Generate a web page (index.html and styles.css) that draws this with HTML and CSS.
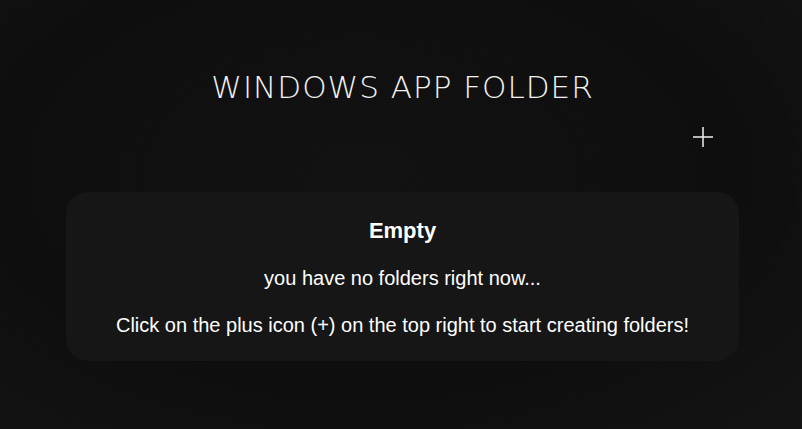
FILE: index.html
```html
<!DOCTYPE html>
<html>

	<head>
		<meta charset="UTF-8">
		<title>Windows App Folder</title>
		<link rel="stylesheet" href="styles.css">
	</head>

	<body>
		<div id="app">
			<h1 class="title">WINDOWS APP FOLDER</h1>
			<div class="toolbar">
				<button class="add" title="New folder">
					<svg width="22" height="22" viewBox="0 0 22 22">
						<path d="M11 1V21M1 11H21" stroke="#f0f0f0" stroke-width="1.5" fill="none" />
					</svg>
				</button>
			</div>
			<div class="empty">
				<h2>Empty</h2>
				<p>you have no folders right now...</p>
				<p>Click on the plus icon (+) on the top right to start creating folders!</p>
			</div>
		</div>
	</body>

</html>
```
FILE: styles.css
```css
html, body {
	margin: 0;
	height: 100%;
}

body {
	background: radial-gradient(ellipse at 45% 40%, #121212 0%, #0e0e0e 60%, #141414 100%);
	color: #fff;
	font-family: "Liberation Sans", Arial, sans-serif;
}

#app {
	width: 673px;
	margin: 0 auto;
	padding: 67px 0 0 3px;
}

.title {
	margin: 0;
	text-align: center;
	font-family: "DejaVu Sans", sans-serif;
	font-weight: 200;
	font-size: 31px;
	letter-spacing: 1px;
	line-height: 40px;
	color: #f2f2f2;
}

.toolbar {
	display: flex;
	justify-content: flex-end;
	padding-right: 25px;
	margin-top: 19px;
}

.add {
	background: none;
	border: none;
	padding: 0;
	width: 22px;
	height: 22px;
	cursor: pointer;
}

.add svg {
	display: block;
}

.empty {
	margin-top: 44px;
	background: #161616;
	border-radius: 22px;
	padding: 24px 20px 21px;
	text-align: center;
}

.empty h2 {
	margin: 0;
	font-size: 22px;
	line-height: 30px;
}

.empty p {
	margin: 17px 0 0;
	font-size: 20px;
	line-height: 30px;
}
```
